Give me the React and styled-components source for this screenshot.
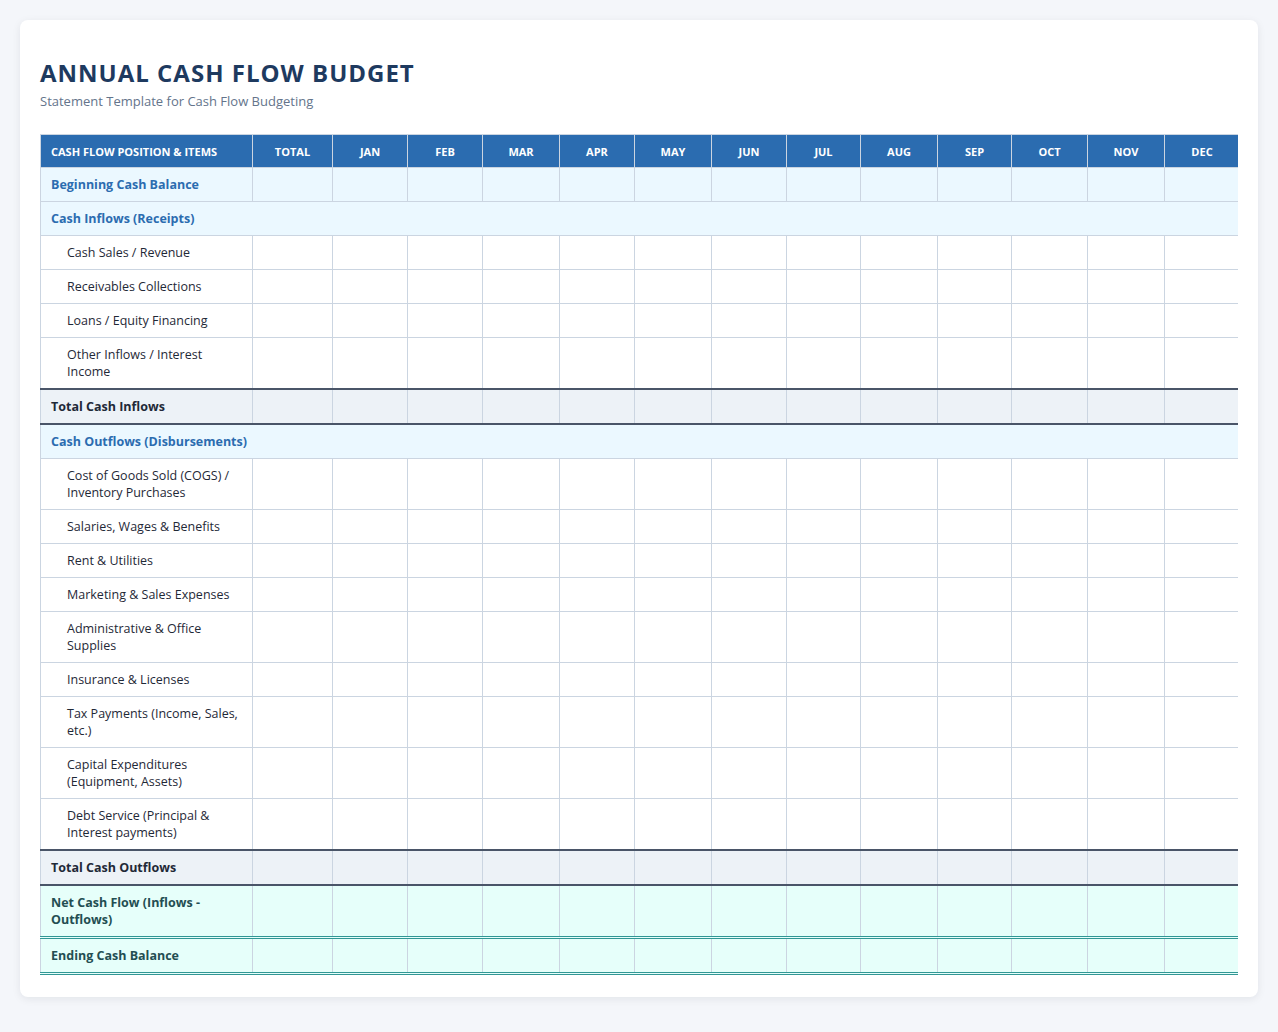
import React from "react";
import styled, { createGlobalStyle, css } from "styled-components";

const Global = createGlobalStyle`
  html, body { margin: 0; background: #f4f6fa; font-family: "Open Sans", "Noto Sans", sans-serif; }
  body { padding: 20px; }
`;

const Card = styled.div`
  background: #fff;
  border-radius: 8px;
  box-shadow: 0 2px 8px rgba(15, 23, 42, 0.08);
  padding: 38px 20px 2px;
`;
const Title = styled.h1`
  margin: 0;
  font-size: 24px;
  font-weight: 700;
  letter-spacing: 1px;
  color: #1e3a5f;
  line-height: 30px;
`;
const Subtitle = styled.p`
  margin: 4px 0 0;
  font-size: 13px;
  color: #64748b;
`;
const Scroll = styled.div`
  margin-top: 24px;
  overflow-x: auto;
  padding-bottom: 20px;
`;
const Table = styled.table`
  width: 1200px;
  min-width: 1200px;
  border-collapse: collapse;
  table-layout: fixed;
  font-size: 12.5px;
  color: #1f2937;
`;
const Th = styled.th`
  background: #2b6cb0;
  color: #fff;
  font-size: 11px;
  font-weight: 700;
  text-transform: uppercase;
  height: 32px;
  padding: 0 10px;
  border: 1px solid #cbd5e1;
  text-align: ${(p) => (p.$left ? "left" : "center")};
`;
const Tr = styled.tr`
  ${(p) => p.$kind === "section" && css`background: #ebf8ff; td { color: #2b6cb0; font-weight: 700; }`}
  ${(p) => p.$kind === "total" && css`background: #edf2f7; border-top: 2px solid #4a5568; border-bottom: 2px solid #4a5568; td { font-weight: 700; color: #1f2937; }`}
  ${(p) => p.$kind === "net" && css`background: #e6fffa; border-bottom: 3px double #319795; td { font-weight: 700; color: #234e52; }`}
`;
const Td = styled.td`
  border: 1px solid #cbd5e1;
  height: 33px;
  padding: 8px 10px;
  box-sizing: border-box;
  line-height: 17px;
  ${(p) => p.$indent && css`padding-left: 26px;`}
`;

const months = ["Jan","Feb","Mar","Apr","May","Jun","Jul","Aug","Sep","Oct","Nov","Dec"];
const widths = [212, 80, 75, 75, 77, 75, 77, 75, 74, 77, 74, 76, 77];

const rows = [
  ["section", "Beginning Cash Balance"],
  ["span", "Cash Inflows (Receipts)"],
  ["item", "Cash Sales / Revenue"],
  ["item", "Receivables Collections"],
  ["item", "Loans / Equity Financing"],
  ["item", "Other Inflows / Interest Income"],
  ["total", "Total Cash Inflows"],
  ["span", "Cash Outflows (Disbursements)"],
  ["item", "Cost of Goods Sold (COGS) / Inventory Purchases"],
  ["item", "Salaries, Wages & Benefits"],
  ["item", "Rent & Utilities"],
  ["item", "Marketing & Sales Expenses"],
  ["item", "Administrative & Office Supplies"],
  ["item", "Insurance & Licenses"],
  ["item", "Tax Payments (Income, Sales, etc.)"],
  ["item", "Capital Expenditures (Equipment, Assets)"],
  ["item", "Debt Service (Principal & Interest payments)"],
  ["total", "Total Cash Outflows"],
  ["net", "Net Cash Flow (Inflows - Outflows)"],
  ["net", "Ending Cash Balance"],
];

export default function App() {
  return (
    <>
      <Global />
      <Card>
        <Title>ANNUAL CASH FLOW BUDGET</Title>
        <Subtitle>Statement Template for Cash Flow Budgeting</Subtitle>
        <Scroll>
          <Table>
            <colgroup>
              {widths.map((w, i) => <col key={i} style={{ width: w }} />)}
            </colgroup>
            <thead>
              <tr>
                <Th $left>Cash Flow Position &amp; Items</Th>
                <Th>Total</Th>
                {months.map((m) => <Th key={m}>{m}</Th>)}
              </tr>
            </thead>
            <tbody>
              {rows.map(([k, label]) =>
                k === "span" ? (
                  <Tr key={label} $kind="section"><Td colSpan={14}>{label}</Td></Tr>
                ) : (
                  <Tr key={label} $kind={k}>
                    <Td $indent={k === "item"}>{label}</Td>
                    {Array.from({ length: 13 }).map((_, i) => <Td key={i} />)}
                  </Tr>
                )
              )}
            </tbody>
          </Table>
        </Scroll>
      </Card>
    </>
  );
}
